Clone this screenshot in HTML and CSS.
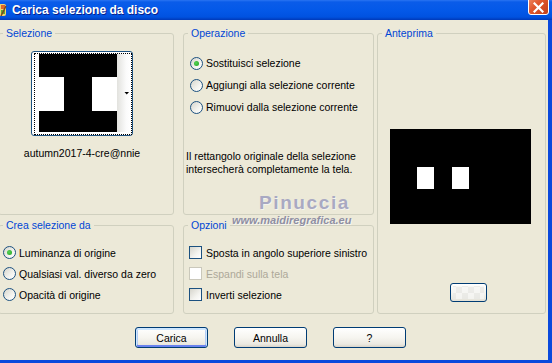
FILE: index.html
```html
<!DOCTYPE html>
<html lang="it">
<head>
    <meta charset="UTF-8">
    <title>Carica selezione da disco</title>
    <link rel="stylesheet" href="styles.css">
</head>
<body>
    <div class="window">
        <div class="titlebar">
            <svg class="app_icon" width="16" height="16" viewBox="0 0 16 16">
                <rect x="2" y="2" width="12" height="12" rx="2" fill="#f3d36b"/>
                <rect x="9" y="3" width="4" height="4" fill="#e0672a"/>
                <rect x="9" y="8" width="4" height="4" fill="#5fa83a"/>
                <path d="M9 14 L14 4" stroke="#7a4b1c" stroke-width="1.5"/>
            </svg>
            <span class="title">Carica selezione da disco</span>
            <span class="close">
                <svg width="11" height="11" viewBox="0 0 11 11">
                    <path d="M1.5 1.5 L9.5 9.5 M9.5 1.5 L1.5 9.5" stroke="#fff" stroke-width="2.2" stroke-linecap="square"/>
                </svg>
            </span>
        </div>
        <div class="frame">
            <div class="groups">
                <fieldset class="box sel">
                    <legend>Selezione</legend>
                    <div class="sel_body">
                        <div class="thumb">
                            <div class="focus">
                                <svg width="78" height="78" viewBox="0 0 78 78">
                                    <rect width="78" height="78" fill="#000"/>
                                    <rect x="0" y="23" width="25" height="34" fill="#fff"/>
                                    <rect x="53" y="23" width="25" height="34" fill="#fff"/>
                                </svg>
                                <div class="strip">
                                    <svg width="13" height="78" viewBox="0 0 13 78">
                                        <polygon points="7.5,38 12,38 9.75,40.5" fill="#000"/>
                                    </svg>
                                </div>
                            </div>
                        </div>
                        <div class="sel_name">autumn2017-4-cre@nnie</div>
                    </div>
                </fieldset>

                <fieldset class="box op">
                    <legend>Operazione</legend>
                    <div class="op_body">
                        <label class="row"><span class="radio on"></span>Sostituisci selezione</label>
                        <label class="row"><span class="radio"></span>Aggiungi alla selezione corrente</label>
                        <label class="row"><span class="radio"></span>Rimuovi dalla selezione corrente</label>
                        <p class="info">Il rettangolo originale della selezione intersecherà completamente la tela.</p>
                    </div>
                </fieldset>

                <fieldset class="box preview">
                    <legend>Anteprima</legend>
                    <div class="preview_body">
                        <svg class="canvas" width="141" height="95" viewBox="0 0 141 95">
                            <rect width="141" height="95" fill="#000"/>
                            <rect x="27" y="38" width="17" height="22" fill="#fff"/>
                            <rect x="62" y="38" width="17" height="22" fill="#fff"/>
                        </svg>
                        <button class="swatch"><span></span></button>
                    </div>
                </fieldset>

                <fieldset class="box crea">
                    <legend>Crea selezione da</legend>
                    <div class="list crea_body">
                        <label class="row"><span class="radio on"></span>Luminanza di origine</label>
                        <label class="row"><span class="radio"></span>Qualsiasi val. diverso da zero</label>
                        <label class="row"><span class="radio"></span>Opacità di origine</label>
                    </div>
                </fieldset>

                <fieldset class="box opz">
                    <legend>Opzioni</legend>
                    <div class="list opz_body">
                        <label class="row wide"><span class="check"></span>Sposta in angolo superiore sinistro</label>
                        <label class="row wide off"><span class="check"></span>Espandi sulla tela</label>
                        <label class="row wide"><span class="check"></span>Inverti selezione</label>
                    </div>
                </fieldset>
            </div>

            <div class="buttons">
                <button class="btn default">Carica</button>
                <button class="btn">Annulla</button>
                <button class="btn">?</button>
            </div>
        </div>

        <div class="watermark">
            <div class="wm_name">Pinuccia</div>
            <div class="wm_url">www.maidiregrafica.eu</div>
        </div>
    </div>
</body>
</html>
```
FILE: styles.css
```css
* {
    box-sizing: border-box;
}
body {
    margin: 0;
    background: #ECE9D8;
    font-family: "Liberation Sans", Arial, sans-serif;
    font-size: 10.5px;
    color: #000;
    overflow: hidden;
}
.window {
    position: relative;
    width: 552px;
    height: 363px;
    overflow: hidden;
}
.titlebar {
    display: flex;
    align-items: center;
    height: 20px;
    background: linear-gradient(#2a74f2 0, #0a5ce9 2px, #0358e8 55%, #0052e0 85%, #0039b8 100%);
    color: #fff;
}
.app_icon {
    margin-left: -8px;
    flex: none;
}
.title {
    margin-left: 4px;
    font-weight: bold;
    font-size: 12px;
    text-shadow: 1px 1px 0 #0a1f8a;
}
.close {
    display: flex;
    align-items: center;
    justify-content: center;
    align-self: flex-start;
    margin: -6px 3px 0 auto;
    width: 21px;
    height: 21px;
    border: 1px solid #fff;
    border-radius: 3px;
    background: linear-gradient(135deg, #f0936f, #e1582e 45%, #c3411a);
    padding-top: 5px;
}
.frame {
    height: 343px;
    border-right: 4px solid #0a49dc;
    border-bottom: 3px solid #0a49dc;
    padding-top: 6px;
}
.groups {
    display: grid;
    grid-template-columns: 176px 9px 191px 3px 169px;
    grid-template-rows: 189px 96px;
    row-gap: 3px;
    margin-left: -2px;
}
.box {
    margin: 0;
    padding: 0;
    min-width: 0;
    border: 1px solid #D0D0BF;
    border-radius: 3px;
}
.box legend {
    margin-left: 4px;
    padding: 0 3px;
    line-height: 14px;
    color: #0046D5;
}
.sel {
    grid-column: 1;
    grid-row: 1;
}
.op {
    grid-column: 3;
    grid-row: 1;
}
.preview {
    grid-column: 5;
    grid-row: 1 / 3;
}
.crea {
    grid-column: 1;
    grid-row: 2;
}
.opz {
    grid-column: 3;
    grid-row: 2;
}
.sel_body {
    display: flex;
    flex-direction: column;
    align-items: center;
    padding: 11px 8px 0 0;
}
.thumb {
    width: 102px;
    height: 85px;
    border: 1px solid #1C5180;
    border-radius: 3px;
    background: #fff;
    padding: 1px 0 0 2px;
}
.focus {
    display: flex;
    width: 98px;
    height: 82px;
    border: 1px dotted #000;
    padding-left: 4px;
}
.strip {
    width: 13px;
    height: 78px;
    background: linear-gradient(to right, #e2e2de, #fbfbfb 70%, #ffffff);
}
.strip svg {
    display: block;
}
.sel_name {
    margin-top: 11px;
    line-height: 13px;
}
.op_body {
    padding: 12px 0 0 6px;
}
.row {
    display: flex;
    align-items: center;
    gap: 3px;
    height: 22px;
    white-space: nowrap;
}
.radio {
    position: relative;
    flex: none;
    width: 13px;
    height: 13px;
    border: 1px solid #1C5180;
    border-radius: 50%;
    background: linear-gradient(135deg, #d6d5cc, #f3f3ef 60%, #ffffff);
}
.radio.on::after {
    content: "";
    position: absolute;
    left: 3px;
    top: 3px;
    width: 5px;
    height: 5px;
    border-radius: 50%;
    background: radial-gradient(circle at 40% 40%, #55d355, #21a121);
}
.info {
    margin: 32px 0 0 -4px;
    line-height: 13px;
}
.preview_body {
    display: flex;
    flex-direction: column;
    align-items: flex-start;
    padding-left: 12px;
}
.canvas {
    margin-top: 89px;
}
.swatch {
    margin: 59px 0 0 60px;
    width: 37px;
    height: 19px;
    padding: 2px;
    border: 1px solid #003C74;
    border-radius: 3px;
    background: linear-gradient(#ffffff, #f3f2ec 60%, #e3e1d7);
}
.swatch span {
    display: block;
    height: 100%;
    background: repeating-conic-gradient(#f6f6f4 0 25%, #e9e9e6 0 50%) 3px 1px / 12px 12px;
    opacity: 0.8;
}
.crea_body {
    padding: 10px 0 0 4px;
}
.opz_body {
    padding: 10px 0 0 5px;
}
.list .row {
    height: 21px;
}
.row.wide {
    gap: 4px;
}
.check {
    flex: none;
    width: 13px;
    height: 13px;
    border: 1px solid #1C5180;
    background: linear-gradient(135deg, #d6d5cc, #f3f3ef 60%, #ffffff);
}
.off {
    color: #ACA899;
}
.off .check {
    border-color: #CAC8BB;
    background: #fff;
}
.buttons {
    display: flex;
    gap: 26px;
    margin-top: 13px;
    padding-left: 135px;
}
.btn {
    width: 73px;
    height: 21px;
    padding: 0;
    border: 1px solid #003C74;
    border-radius: 3px;
    background: linear-gradient(#ffffff, #f6f5f0 50%, #ebe9e1 85%, #d8d3c8);
    font-family: "Liberation Sans", Arial, sans-serif;
    font-size: 10.5px;
    color: #000;
}
.btn.default {
    box-shadow: inset 0 1px 0 1px #cee7ff, inset 0 -1px 0 1px #6982ee, inset 1px 0 0 1px #b4cdf5, inset -1px 0 0 1px #b4cdf5;
}
.watermark {
    position: absolute;
    left: 232px;
    top: 192px;
    pointer-events: none;
}
.wm_name {
    margin-left: 27px;
    font-size: 19px;
    font-weight: bold;
    letter-spacing: 1.6px;
    line-height: 22px;
    color: #a9a9c2;
    text-shadow: 1px 1px 0 #f4f3ee;
}
.wm_url {
    font-size: 11px;
    font-weight: bold;
    font-style: italic;
    line-height: 12px;
    color: #8f8fa3;
    text-shadow: 1px 1px 0 #f6f5ef;
}
```
